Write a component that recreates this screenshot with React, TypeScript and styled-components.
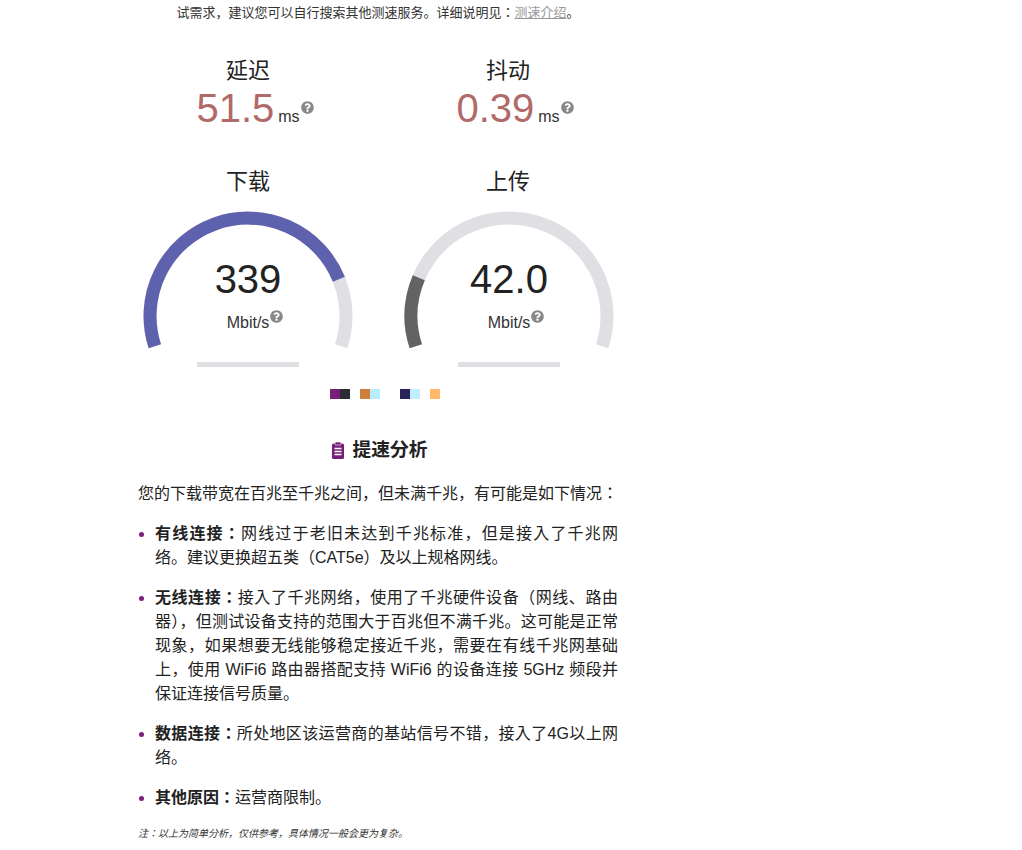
import React from 'react'
import styled, { createGlobalStyle } from 'styled-components'
import { FaQuestionCircle } from 'react-icons/fa'

const GlobalStyle = createGlobalStyle`
	html, body {
		margin: 0;
		height: 850px;
		overflow: hidden;
		background: #fff;
	}
	body {
		font-family: "Liberation Sans", "Noto Sans CJK JP", sans-serif;
		font-size: 16px;
		line-height: 24px;
		color: #222;
	}
`

const Page = styled.div`
	width: 480px;
	margin-left: 138px;
	padding-top: 2px;
`
const Intro = styled.div`
	font-size: 13px;
	line-height: 22px;
	text-align: center;
	color: #333;
`
const IntroLink = styled.a`
	color: #999;
	text-decoration: underline;
`
const Row = styled.div`
	display: flex;
	margin: 0 -20px;
`
const Metric = styled.div`
	width: 260px;
	display: flex;
	flex-direction: column;
	align-items: center;
`
const Title = styled.div`
	font-size: 22px;
	line-height: 30px;
	color: #222;
`
const Reading = styled.div`
	font-size: 40px;
	line-height: 45px;
	color: #b06a6a;
	white-space: nowrap;
	padding-left: 14px;
`
const Unit = styled.span`
	font-size: 16px;
	color: #333;
	margin-left: 4px;
`
const Hint = styled(FaQuestionCircle)`
	width: 13px;
	height: 13px;
	color: #888;
	vertical-align: ${(p: { $lift: number }) => p.$lift}px;
	margin-left: 1px;
`
const StatRow = styled(Row)`
	margin-top: 32px;
`
const GaugeRow = styled(Row)`
	margin-top: 28px;
`
const Dial = styled.div`
	display: flex;
	flex-direction: column;
	align-items: center;
	padding-left: ${(p: { $nudge?: number }) => p.$nudge ?? 0}px;
`
const GaugeBox = styled.div`
	position: relative;
	width: 210px;
	height: 143px;
	margin-top: 14px;
`
const GaugeSvg = styled.svg`
	display: block;
`
const GaugeText = styled.div`
	position: absolute;
	left: 0;
	right: 0;
	top: 44px;
	text-align: center;
`
const GaugeValue = styled.div`
	font-size: 40px;
	line-height: 48px;
	color: #222;
`
const GaugeUnit = styled.div`
	font-size: 16px;
	line-height: 24px;
	color: #333;
	margin-top: 7px;
	padding-left: 14px;
`
const Bar = styled.div`
	width: 102px;
	height: 5px;
	margin-top: 8px;
	background: #e0dfe3;
`
const Swatches = styled.div`
	display: flex;
	justify-content: center;
	gap: 10px;
	margin-top: 22px;
	padding-left: 14px;
`
const SwatchGroup = styled.div`
	display: flex;
	margin-right: ${(p: { $after?: number }) => p.$after ?? 0}px;
`
const Swatch = styled.div`
	width: 10px;
	height: 10px;
	background: ${(p: { $color: string }) => p.$color};
`
const Heading = styled.h3`
	display: flex;
	justify-content: center;
	align-items: center;
	gap: 9px;
	margin: 38px 0 0;
	padding-left: 3px;
	font-size: 18.72px;
	line-height: 26px;
	font-weight: bold;
	color: #222;
`
const Paragraph = styled.p`
	margin: 19px 0 0;
	color: #222;
`
const List = styled.ul`
	margin: 16px 0 0;
	padding-left: 17px;
`
const Item = styled.li`
	margin-bottom: 16px;
	text-align: justify;
	&::marker {
		color: #7b1e7a;
	}
`
const Note = styled.div`
	font-size: 10px;
	line-height: 16px;
	font-style: italic;
	color: #333;
	margin-top: 15px;
`

const R = 98
const C = 105

const point = (deg: number) => {
	const rad = (deg * Math.PI) / 180
	return `${(C + R * Math.cos(rad)).toFixed(2)} ${(C + R * Math.sin(rad)).toFixed(2)}`
}
const arc = (from: number, to: number) =>
	`M ${point(from)} A ${R} ${R} 0 ${to - from > 180 ? 1 : 0} 1 ${point(to)}`

const Gauge: React.FC<{ value: string; end: number; color: string }> = ({ value, end, color }) => (
	<GaugeBox>
		<GaugeSvg width={210} height={143} viewBox="0 0 210 143" fill="none">
			<path d={arc(162, 378)} stroke="#e0dfe3" strokeWidth={13} />
			<path d={arc(162, end)} stroke={color} strokeWidth={13} />
		</GaugeSvg>
		<GaugeText>
			<GaugeValue>{value}</GaugeValue>
			<GaugeUnit>
				Mbit/s<Hint $lift={5} />
			</GaugeUnit>
		</GaugeText>
	</GaugeBox>
)

const NotepadIcon = () => (
	<svg width={12} height={17} viewBox="0 0 12 17">
		<rect x="0" y="1.5" width="12" height="15.5" rx="1.5" fill="#7b1e7a" />
		<rect x="3" y="0" width="6" height="3" rx="1" fill="#7b1e7a" stroke="#fff" strokeWidth="0.6" />
		<path d="M2.5 6.5h7M2.5 9.5h7M2.5 12.5h7" stroke="#fff" strokeWidth="1.3" />
	</svg>
)

export default function App() {
	return (
		<Page>
			<GlobalStyle />
			<Intro>
				试需求，建议您可以自行搜索其他测速服务。详细说明见：<IntroLink>测速介绍</IntroLink>。
			</Intro>
			<StatRow>
				<Metric>
					<Title>延迟</Title>
					<Reading>
						51.5<Unit>ms</Unit>
						<Hint $lift={8} />
					</Reading>
				</Metric>
				<Metric>
					<Title>抖动</Title>
					<Reading>
						0.39<Unit>ms</Unit>
						<Hint $lift={8} />
					</Reading>
				</Metric>
			</StatRow>
			<GaugeRow>
				<Metric>
					<Title>下载</Title>
					<Dial>
						<Gauge value="339" end={338} color="#5e62ae" />
						<Bar />
					</Dial>
				</Metric>
				<Metric>
					<Title>上传</Title>
					<Dial $nudge={2}>
						<Gauge value="42.0" end={203} color="#636265" />
						<Bar />
					</Dial>
				</Metric>
			</GaugeRow>
			<Swatches>
				<SwatchGroup>
					<Swatch $color="#7a1f77" />
					<Swatch $color="#2b2d33" />
				</SwatchGroup>
				<SwatchGroup $after={10}>
					<Swatch $color="#cf8038" />
					<Swatch $color="#b8ecff" />
				</SwatchGroup>
				<SwatchGroup>
					<Swatch $color="#2a2358" />
					<Swatch $color="#c0eeff" />
				</SwatchGroup>
				<SwatchGroup>
					<Swatch $color="#ffb86c" />
				</SwatchGroup>
			</Swatches>
			<Heading>
				<NotepadIcon />
				提速分析
			</Heading>
			<Paragraph>您的下载带宽在百兆至千兆之间，但未满千兆，有可能是如下情况：</Paragraph>
			<List>
				<Item>
					<strong>有线连接：</strong>网线过于老旧未达到千兆标准，但是接入了千兆网络。建议更换超五类（CAT5e）及以上规格网线。
				</Item>
				<Item>
					<strong>无线连接：</strong>接入了千兆网络，使用了千兆硬件设备（网线、路由器），但测试设备支持的范围大于百兆但不满千兆。这可能是正常现象，如果想要无线能够稳定接近千兆，需要在有线千兆网基础上，使用 WiFi6 路由器搭配支持 WiFi6 的设备连接 5GHz 频段并保证连接信号质量。
				</Item>
				<Item>
					<strong>数据连接：</strong>所处地区该运营商的基站信号不错，接入了4G以上网络。
				</Item>
				<Item>
					<strong>其他原因：</strong>运营商限制。
				</Item>
			</List>
			<Note>注：以上为简单分析，仅供参考，具体情况一般会更为复杂。</Note>
		</Page>
	)
}
